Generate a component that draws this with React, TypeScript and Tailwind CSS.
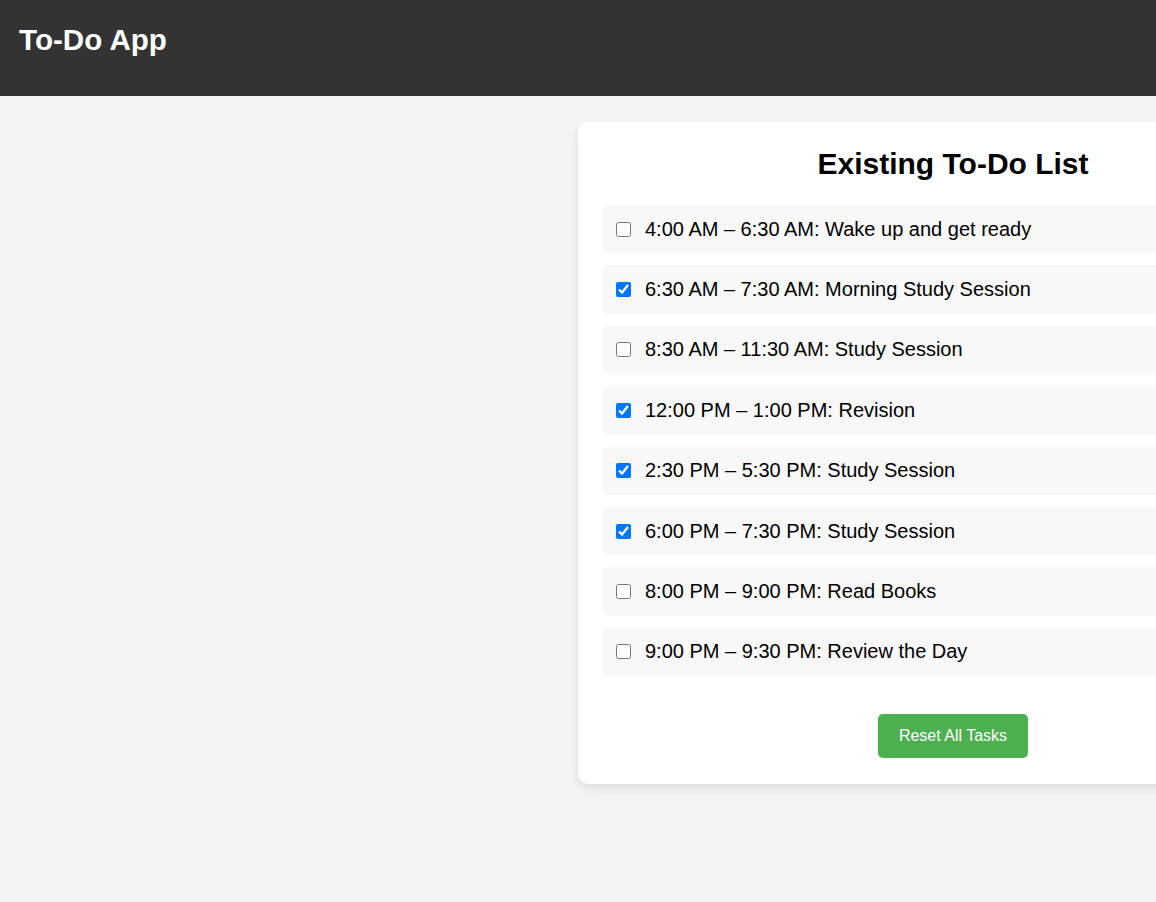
import React, { useState } from 'react';

const initialTasks = [
  { id: 1, text: '4:00 AM – 6:30 AM: Wake up and get ready', done: false },
  { id: 2, text: '6:30 AM – 7:30 AM: Morning Study Session', done: true },
  { id: 3, text: '8:30 AM – 11:30 AM: Study Session', done: false },
  { id: 4, text: '12:00 PM – 1:00 PM: Revision', done: true },
  { id: 5, text: '2:30 PM – 5:30 PM: Study Session', done: true },
  { id: 6, text: '6:00 PM – 7:30 PM: Study Session', done: true },
  { id: 7, text: '8:00 PM – 9:00 PM: Read Books', done: false },
  { id: 8, text: '9:00 PM – 9:30 PM: Review the Day', done: false },
];

const App: React.FC = () => {
  const [tasks, setTasks] = useState(initialTasks);

  const toggleTask = (id: number) => {
    setTasks(tasks.map((t) => (t.id === id ? { ...t, done: !t.done } : t)));
  };

  const resetAll = () => {
    setTasks(tasks.map((t) => ({ ...t, done: false })));
  };

  return (
    <div className="min-h-screen overflow-x-hidden bg-[#f4f4f4] font-['Liberation_Sans',Arial,sans-serif] text-black">
      <header className="h-[96px] bg-[#333333] px-[19px] pt-[20px]">
        <h1 className="text-[29.6px] font-bold leading-[40px] text-white">To-Do App</h1>
      </header>

      <main className="flex pt-[26px] pl-[578px] pb-10">
        <div className="w-[750px] shrink-0 rounded-[10px] bg-white p-[25px] pb-[26px] shadow-[0_4px_10px_rgba(0,0,0,0.1)]">
          <h2 className="mb-[23.5px] text-center text-[30px] font-bold leading-[34.5px]">
            Existing To-Do List
          </h2>

          <ul className="flex flex-col gap-[12px]">
            {tasks.map((task) => (
              <li
                key={task.id}
                className="flex h-[48.4px] items-center rounded-[5px] bg-[#f8f8f8] pl-[13px]"
              >
                <input
                  type="checkbox"
                  checked={task.done}
                  onChange={() => toggleTask(task.id)}
                  className="mr-[14px] h-[15px] w-[15px] accent-[#0075ff]"
                />
                <span className="text-[20px] leading-[23px]">{task.text}</span>
              </li>
            ))}
          </ul>

          <div className="mt-[38px] flex justify-center">
            <button
              onClick={resetAll}
              className="h-[44px] w-[150px] rounded-[5px] bg-[#4caf50] text-[16px] text-white"
            >
              Reset All Tasks
            </button>
          </div>
        </div>
      </main>
    </div>
  );
};

export default App;
